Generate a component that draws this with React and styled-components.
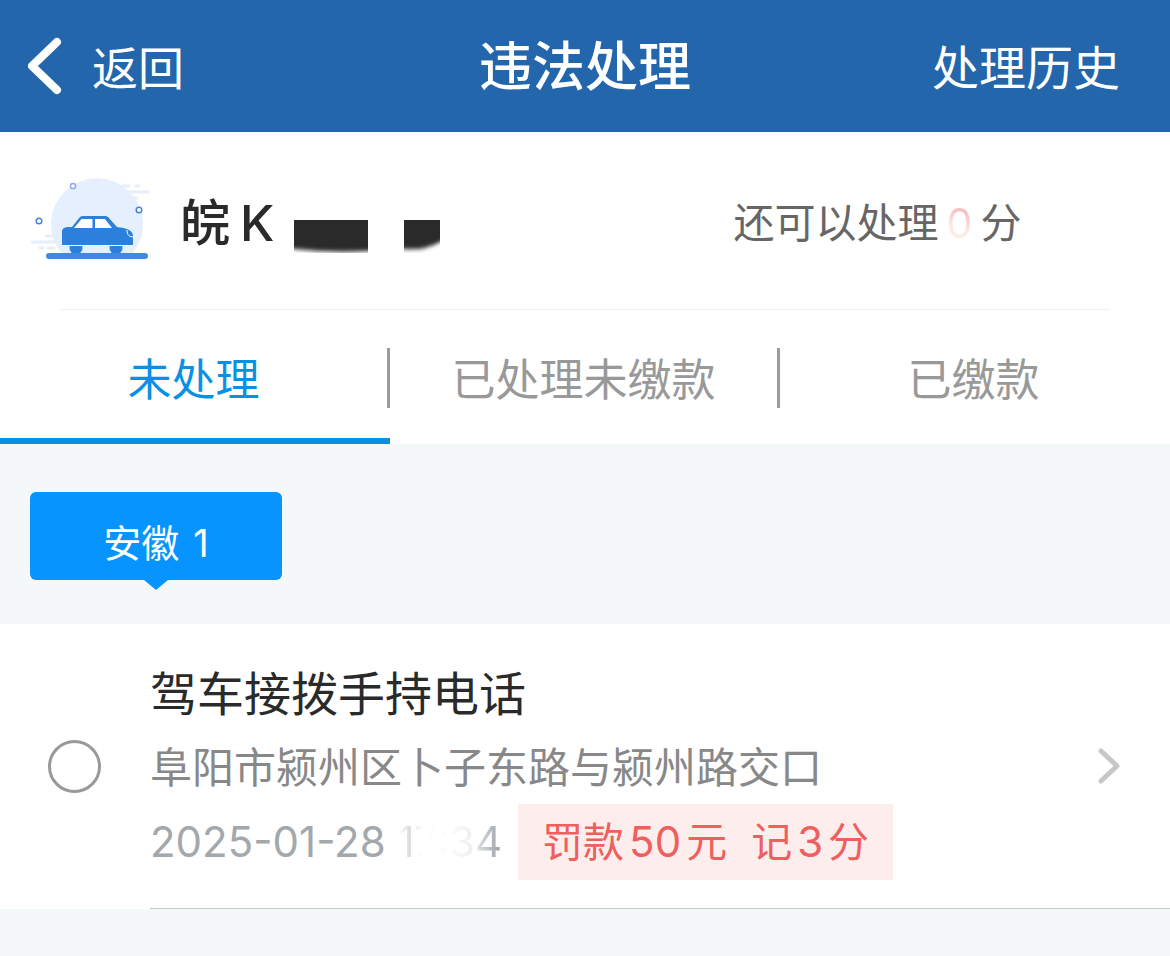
import React from "react";
import styled, { createGlobalStyle } from "styled-components";

const GlobalStyle = createGlobalStyle`
  * { box-sizing: border-box; }
  body {
    margin: 0;
    background: #f4f8f9;
    color: #2a2a2a;
    font-family: Inter, "Noto Sans CJK SC", sans-serif;
  }
  button {
    border: 0;
    padding: 0;
    background: none;
    color: inherit;
    font: inherit;
    cursor: pointer;
  }
  h1, h2, p { margin: 0; font-weight: 400; }
  svg { display: block; }
`;

const Header = styled.header`
  display: grid;
  grid-template-columns: 1fr auto 1fr;
  align-items: center;
  height: 132px;
  padding: 0 28px;
  background: #2366ac;
  color: #fff;
  line-height: 68px;
`;

const BackButton = styled.button`
  display: flex;
  align-items: center;
  justify-self: start;
  gap: 29px;
  font-size: 46px;
`;

const BackLabel = styled.span`
  padding-top: 4px;
`;

const Title = styled.h1`
  padding-top: 2px;
  font-size: 53px;
  font-weight: 500;
`;

const HistoryLink = styled.a`
  justify-self: end;
  padding: 4px 22px 0 0;
  color: inherit;
  font-size: 47px;
  text-decoration: none;
`;

const Panel = styled.section`
  background: #fff;
`;

const Vehicle = styled.div`
  display: grid;
  grid-template-columns: 1fr 1fr;
  align-items: center;
  height: 177px;
  padding-top: 4px;
`;

const Plate = styled.div`
  display: flex;
  align-items: center;
  padding-left: 30px;
`;

const PlateText = styled.h2`
  display: flex;
  gap: 10px;
  margin-left: 30px;
  font-size: 50px;
  font-weight: 500;
  line-height: 60px;
`;

const Remaining = styled.p`
  color: #666;
  font-size: 41px;
  line-height: 60px;
  text-align: center;
`;

const Points = styled.span`
  padding: 0 8px;
  background: linear-gradient(200deg, #f7c0be 30%, #fdeae8 60%);
  background-clip: text;
  color: transparent;
`;

const Rule = styled.hr`
  height: 1px;
  margin: 0 60px;
  border: 0;
  background: #f0f0f0;
`;

const Tabs = styled.nav`
  display: grid;
  grid-template-columns: repeat(3, 1fr);
  height: 134px;
`;

const Tab = styled.button`
  display: grid;
  grid-template-columns: 1fr 3px;
  align-items: center;
  border-bottom: 6px solid ${(p) => (p.$active ? "#0890e4" : "transparent")};
  padding-top: 8px;
  color: ${(p) => (p.$active ? "#0890e4" : "#999")};
  font-size: 44px;
  line-height: 60px;

  &:not(:last-child)::after {
    content: "";
    height: 60px;
    background: #9b9b9b;
  }
`;

const TabLabel = styled.span`
  padding-top: 4px;
`;

const Regions = styled.div`
  display: flex;
  height: 180px;
  padding: 48px 30px;
`;

const RegionButton = styled.button`
  position: relative;
  display: flex;
  align-items: center;
  justify-content: center;
  gap: 14px;
  width: 252px;
  height: 88px;
  border-radius: 6px;
  padding-top: 14px;
  background: #0894ff;
  color: #fff;
  font-size: 38px;
  line-height: 60px;

  &::after {
    content: "";
    position: absolute;
    top: 100%;
    left: 50%;
    border: 12px solid transparent;
    border-top: 10px solid #0894ff;
    border-bottom: 0;
    transform: translateX(-50%);
  }
`;

const Violation = styled.article`
  display: grid;
  grid-template-columns: 150px 1fr;
  background: #fff;
`;

const Pick = styled.label`
  display: flex;
  align-items: center;
  padding-left: 48px;
`;

const Circle = styled.input`
  appearance: none;
  width: 53px;
  height: 53px;
  margin: 0;
  border: 3px solid #999;
  border-radius: 50%;

  &:checked {
    background: #0894ff;
  }
`;

const Details = styled.div`
  display: flex;
  align-items: center;
  justify-content: space-between;
  height: 285px;
  padding-right: 50px;
  border-bottom: 1px solid #c3c8c8;
`;

const Summary = styled.div`
  padding-top: 4px;
`;

const Offence = styled.h2`
  font-size: 47px;
  line-height: 72px;
`;

const Place = styled.p`
  color: #888;
  font-size: 42px;
  line-height: 76px;
`;

const Meta = styled.div`
  display: flex;
  align-items: center;
  height: 72px;
  gap: 16px;
  white-space: nowrap;
`;

const DateTime = styled.time`
  color: #a3a8ad;
  font-size: 42px;
  line-height: 60px;
`;

const FadedTime = styled.span`
  background: linear-gradient(90deg, #fff 2%, #d2d4d6 14%, #fff 24%, #fafafa 54%, #eceeef 72%, #a3a8ad 96%);
  background-clip: text;
  color: transparent;
`;

const Penalty = styled.span`
  display: flex;
  gap: 24px;
  padding: 0 24px;
  background: #fdeeed;
  color: #ee6060;
  font-size: 41px;
  line-height: 75px;
`;

const Amount = styled.span`
  padding: 0 5px;
  font-size: 42px;
`;

const CarPicture = () => (
  <svg width="120" height="90" viewBox="0 4 120 90" aria-hidden="true">
    <path d="M32 80A46 46 0 1 1 102 80Z" fill="#e5effe" />
    <path
      d="M92 12H99M106 12H109M96 18H118M98 24H107M16 62H22M2 68H24M10 74H13M18 74H24"
      stroke="#e5effe"
      strokeWidth="3"
      strokeLinecap="round"
    />
    <g fill="#fff" strokeWidth="1.5">
      <circle cx="43" cy="12" r="2.6" stroke="#8da5ee" />
      <circle cx="109" cy="36" r="2.8" stroke="#4a83dc" />
      <circle cx="9" cy="47" r="2.8" stroke="#4a83dc" />
    </g>
    <circle cx="46" cy="74" r="6.5" fill="#2b80db" />
    <circle cx="86" cy="74" r="6.5" fill="#2b80db" />
    <path d="M32 57Q32 54 37 53H42L50 43Q51 42 53 42H75Q77 42 78 43L87 53C96 54 103 56 103 62V71H32Z" fill="#2b80db" />
    <path d="M44 54L51.500 45H62.500V54ZM65 45H75L82 54H65Z" fill="#fff" />
    <path d="M32 71.500H103" stroke="#fff" />
    <path d="M97 56C97 61 99 63 104 63" fill="none" stroke="#fff" />
    <rect x="16" y="79" width="102" height="6" rx="3" fill="#4088e3" />
  </svg>
);

const HiddenDigits = () => (
  <svg width="166" height="60" viewBox="0 0 166 60" aria-hidden="true">
    <defs>
      <filter id="soft" x="-10%" y="-20%" width="120%" height="150%">
        <feGaussianBlur stdDeviation="0 2" />
      </filter>
      <clipPath id="digits">
        <path d="M20 27H94V64H20ZM130 27H166V64H130Z" />
      </clipPath>
    </defs>
    <g clipPath="url(#digits)" fill="#2c2c2c">
      <path filter="url(#soft)" d="M20 18H94V58Q55 60 20 56ZM130 18H166V49Q150 58 130 56Z" />
    </g>
  </svg>
);

export default function App() {
  return (
    <>
      <GlobalStyle />
      <Header>
        <BackButton>
          <svg width="35" height="58" viewBox="0 0 35 58" fill="none" stroke="#fff" strokeWidth="8" strokeLinecap="round" strokeLinejoin="round" aria-hidden="true">
            <path d="M29 5L4 29L29 53" />
          </svg>
          <BackLabel>返回</BackLabel>
        </BackButton>
        <Title>违法处理</Title>
        <HistoryLink href="#history">处理历史</HistoryLink>
      </Header>
      <main>
        <Panel>
          <Vehicle>
            <Plate>
              <CarPicture />
              <PlateText><span>皖</span><span>K</span></PlateText>
              <HiddenDigits />
            </Plate>
            <Remaining>还可以处理<Points>0</Points>分</Remaining>
          </Vehicle>
          <Rule />
          <Tabs>
            <Tab $active><TabLabel>未处理</TabLabel></Tab>
            <Tab><TabLabel>已处理未缴款</TabLabel></Tab>
            <Tab><TabLabel>已缴款</TabLabel></Tab>
          </Tabs>
        </Panel>
        <Regions>
          <RegionButton><span>安徽</span><span>1</span></RegionButton>
        </Regions>
        <Violation>
          <Pick>
            <Circle type="checkbox" aria-label="驾车接拨手持电话" />
          </Pick>
          <Details>
            <Summary>
              <Offence>驾车接拨手持电话</Offence>
              <Place>阜阳市颍州区卜子东路与颍州路交口</Place>
              <Meta>
                <DateTime>2025-01-28 <FadedTime>17:34</FadedTime></DateTime>
                <Penalty>
                  <span>罚款<Amount>50</Amount>元</span>
                  <span>记<Amount>3</Amount>分</span>
                </Penalty>
              </Meta>
            </Summary>
            <button aria-label="查看详情">
              <svg width="22" height="38" viewBox="0 0 22 38" fill="none" stroke="#c7c7c7" strokeWidth="5" strokeLinecap="round" strokeLinejoin="round" aria-hidden="true">
                <path d="M3 4L19 19L3 34" />
              </svg>
            </button>
          </Details>
        </Violation>
      </main>
    </>
  );
}
